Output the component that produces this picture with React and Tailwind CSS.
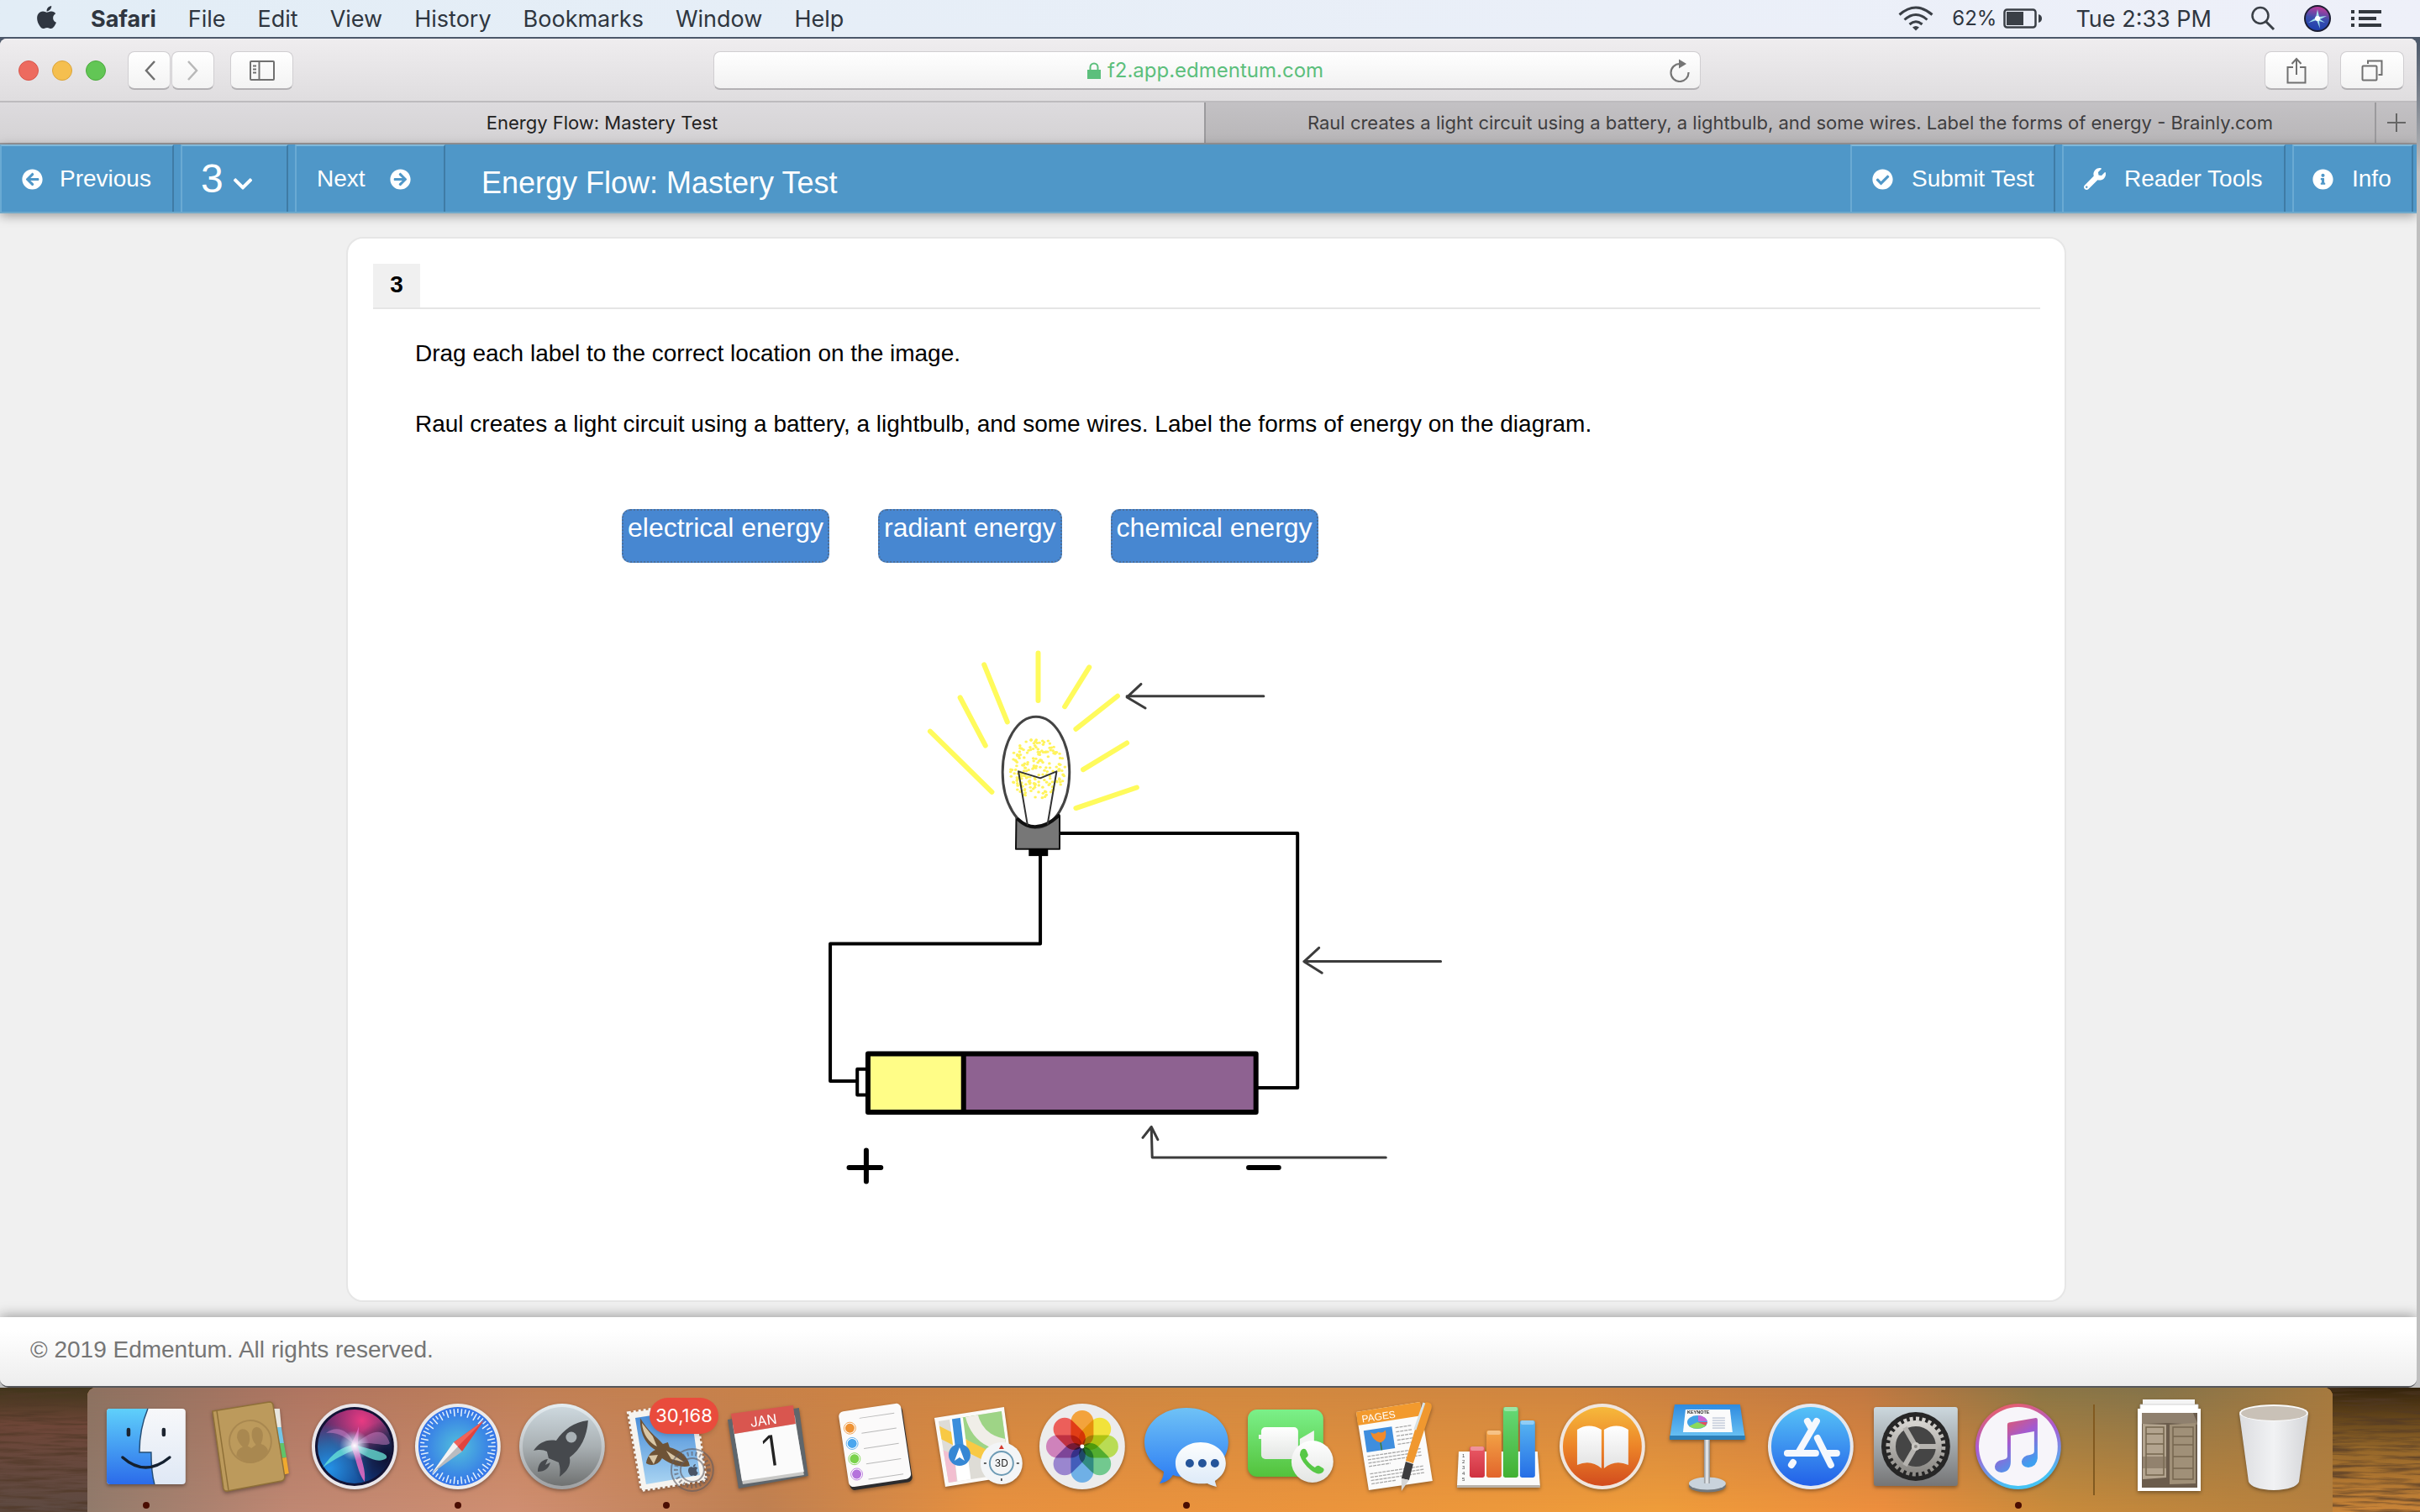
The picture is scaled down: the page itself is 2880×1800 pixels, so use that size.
import React from "react";
import {
  FaApple,
  FaArrowCircleLeft,
  FaArrowCircleRight,
  FaCheckCircle,
  FaChevronDown,
  FaInfoCircle,
  FaWrench,
} from "react-icons/fa";

const UI = "font-['Inter','Liberation_Sans',sans-serif]";
const PAGE = "font-['Liberation_Sans',Arial,sans-serif]";

/* ---------- menu bar ---------- */

function SiriGlyph() {
  return (
    <svg className="size-8" viewBox="0 0 32 32" aria-hidden="true">
      <defs>
        <linearGradient id="siriSmall" x1="0.6" y1="0" x2="0.4" y2="1">
          <stop offset="0" stopColor="#c23a9a" />
          <stop offset="0.5" stopColor="#3b4fae" />
          <stop offset="1" stopColor="#1d3fae" />
        </linearGradient>
      </defs>
      <circle cx="16" cy="16" r="16" fill="#1b1d33" />
      <circle cx="16" cy="16" r="14" fill="url(#siriSmall)" />
      <path d="M5 21L14 15L16 5L18 14L27 13L19 17L25 21L18 19L19 28L15 18Z" fill="#aef3f5" opacity="0.9" />
      <circle cx="16" cy="16" r="3" fill="#fff" />
    </svg>
  );
}

function MenuBar() {
  const items = ["File", "Edit", "View", "History", "Bookmarks", "Window", "Help"];
  return (
    <header className={`${UI} flex h-11 shrink-0 items-center bg-linear-to-r from-[#e2edf6] to-[#eef0f9] text-[27px] leading-none text-[#2f3640]`}>
      <button aria-label="Apple menu" className="ml-10 mr-[37px] -mt-1">
        <FaApple className="size-[31px]" />
      </button>
      <nav className="flex gap-[38px]">
        <button className="font-bold">Safari</button>
        {items.map((t) => (
          <button key={t}>{t}</button>
        ))}
      </nav>
      <div className="ml-auto flex items-center pr-[46px]">
        <svg className="h-[30px] w-[42px]" viewBox="0 0 42 30" fill="none" stroke="#3a3f46" strokeWidth="3" role="img" aria-label="Wi-Fi">
          <path d="M1.5 10.500Q21 -6.500 40.500 10.500" />
          <path d="M7.500 16.500Q21 4.500 34.500 16.500" />
          <path d="M13.500 22Q21 15.500 28.500 22" />
          <path d="M17 25.500Q21 22.500 25 25.500L21 29.500Z" fill="#3a3f46" stroke="none" />
        </svg>
        <span className="ml-[22px] text-[24px]">62%</span>
        <svg className="ml-2 h-6 w-[46px]" viewBox="0 0 46 24" role="img" aria-label="Battery">
          <rect x="1.500" y="1.500" width="37" height="21" rx="3" fill="none" stroke="#3a3f46" strokeWidth="2.500" />
          <rect x="4" y="4" width="20" height="16" fill="#3a3f46" />
          <path d="M42 7Q46 8 46 12T42 17Z" fill="#3a3f46" />
        </svg>
        <time className="ml-10">Tue 2:33 PM</time>
        <button aria-label="Spotlight" className="ml-[46px]">
          <svg className="size-[30px]" viewBox="0 0 30 30" fill="none" stroke="#3a3f46" strokeWidth="2.500">
            <circle cx="12" cy="11.500" r="9.500" />
            <path d="M18.500 18.500L28 28" strokeWidth="3" />
          </svg>
        </button>
        <button aria-label="Siri" className="ml-[34px]">
          <SiriGlyph />
        </button>
        <button aria-label="Notification Center" className="ml-6">
          <svg className="h-5 w-9" viewBox="0 0 36 20" fill="#33383f">
            <path d="M0 0h4v4H0zM9 0h27v4H9zM0 8h4v4H0zM9 8h21v4H9zM0 16h4v4H0zM9 16h27v4H9z" />
          </svg>
        </button>
      </div>
    </header>
  );
}

/* ---------- browser chrome ---------- */

function ToolButton({ label, className, children }) {
  return (
    <button
      aria-label={label}
      className={`flex h-[46px] items-center justify-center rounded-lg border border-b-2 border-[#d0ced1] border-b-[#b3b1b4] bg-linear-to-b from-white to-[#f3f3f3] text-[#6f6f6f] ${className}`}
    >
      {children}
    </button>
  );
}

function Toolbar() {
  return (
    <div className="flex h-[76px] items-center border-b-2 border-[#bdbbbe] bg-linear-to-b from-[#efedef] to-[#dfdddf] pl-[22px] pr-[15px] pt-[2px]">
      <div className="flex flex-1 items-center">
        <div className="flex gap-4">
          <button aria-label="Close" className="size-6 rounded-full border border-[#d8574c] bg-[#ed6b5f]" />
          <button aria-label="Minimize" className="size-6 rounded-full border border-[#dba43c] bg-[#f5bf4f]" />
          <button aria-label="Zoom" className="size-6 rounded-full border border-[#4caa3e] bg-[#62c655]" />
        </div>
        <ToolButton label="Back" className="ml-[26px] w-[51px]">
          <svg className="h-6 w-4" viewBox="0 0 16 24" fill="none" stroke="#707070" strokeWidth="2.500"><path d="M14 1L4 12L14 23" /></svg>
        </ToolButton>
        <ToolButton label="Forward" className="ml-px w-[51px]">
          <svg className="h-6 w-4" viewBox="0 0 16 24" fill="none" stroke="#b8b8b8" strokeWidth="2.500"><path d="M2 1L12 12L2 23" /></svg>
        </ToolButton>
        <ToolButton label="Show sidebar" className="ml-[19px] w-[75px]">
          <svg className="h-6 w-[30px]" viewBox="0 0 30 24" fill="none" stroke="#707070" strokeWidth="2">
            <rect x="1" y="1" width="28" height="22" rx="1" />
            <path d="M11.500 1V23M4 6.500H8M4 10.500H8M4 14.500H8" />
          </svg>
        </ToolButton>
      </div>
      <div className="mr-2.5 flex h-[46px] w-[41.4%] items-center rounded-lg border border-b-2 border-[#d0ced1] border-b-[#b3b1b4] bg-linear-to-b from-white to-[#f1f1f1] px-3">
        <div className="flex flex-1 items-center justify-center gap-2 pl-5">
          <svg className="h-5 w-4" viewBox="0 0 16 20" fill="#5cbf7c" aria-hidden="true">
            <path d="M0 9h16v11H0z" />
            <path d="M3.500 10V6a4.500 4.500 0 0 1 9 0v4" fill="none" stroke="#5cbf7c" strokeWidth="2" />
          </svg>
          <a href="#page" className={`${UI} text-[24px] leading-none text-[#5cbf7c]`}>f2.app.edmentum.com</a>
        </div>
        <button aria-label="Reload">
          <svg className="h-7 w-6" viewBox="0 0 24 28" fill="none" stroke="#757575" strokeWidth="2.200">
            <path d="M22.500 16A10.500 10.500 0 1 1 12 6" />
            <path d="M11 0.500L20 6L11 11.500Z" fill="#757575" stroke="none" />
          </svg>
        </button>
      </div>
      <div className="flex flex-1 justify-end gap-[14px]">
        <ToolButton label="Share" className="w-[76px]">
          <svg className="h-8 w-6" viewBox="0 0 24 32" fill="none" stroke="#707070" strokeWidth="2">
            <path d="M8 12H1.500V30.500H22.500V12H16M12 21V2M6.500 8L12 2L17.500 8" />
          </svg>
        </ToolButton>
        <ToolButton label="Show all tabs" className="w-[76px]">
          <svg className="size-[26px]" viewBox="0 0 26 26" fill="none" stroke="#707070" strokeWidth="2">
            <path d="M8 5V1.500H24.500V18H20.500" />
            <rect x="1.500" y="7.500" width="17" height="17" rx="1" />
          </svg>
        </ToolButton>
      </div>
    </div>
  );
}

function TabBar() {
  return (
    <div className={`${UI} flex h-[50px] border-b-2 border-[#9b9a9d] text-[22px] leading-none`}>
      <button className="flex-[1434_1_0%] truncate bg-linear-to-b from-[#dddbde] to-[#d4d2d4] text-[#222]">
        Energy Flow: Mastery Test
      </button>
      <button className="flex-[1392_1_0%] truncate border-l-2 border-[#9b9a9d] bg-linear-to-b from-[#c3c1c4] to-[#b8b6b8] text-[#3f3e40]">
        Raul creates a light circuit using a battery, a lightbulb, and some wires. Label the forms of energy - Brainly.com
      </button>
      <button aria-label="New tab" className="flex w-[50px] items-center justify-center border-l-2 border-[#9b9a9d] bg-linear-to-b from-[#c3c1c4] to-[#b8b6b8]">
        <svg className="size-[22px]" viewBox="0 0 22 22" stroke="#666" strokeWidth="2"><path d="M11 0V22M0 11H22" /></svg>
      </button>
    </div>
  );
}

/* ---------- test page ---------- */

function NavButton({ className = "", children }) {
  return (
    <button className={`flex h-full items-center border-l-2 border-r-2 border-t-2 border-l-[#6aaad3] border-r-[#3f7ba5] border-t-[#7fb8da] ${className}`}>
      {children}
    </button>
  );
}

function TestHeader() {
  return (
    <div className={`${PAGE} relative flex h-[82px] shrink-0 items-stretch border-b-2 border-[#6fa9cb] bg-[#4f97c8] text-[28px] leading-8 text-white shadow-[0_3px_12px_rgba(0,0,0,0.35)]`}>
      <NavButton className="w-[207px] gap-5 pl-6">
        <FaArrowCircleLeft className="size-[25px]" />
        Previous
      </NavButton>
      <NavButton className="ml-2 w-[128px] gap-2.5 pl-[22px]">
        <span className="text-[48px] leading-none">3</span>
        <FaChevronDown className="mt-3 size-[26px]" />
      </NavButton>
      <NavButton className="ml-2 w-[179px] gap-[29px] pl-6">
        Next
        <FaArrowCircleRight className="size-[25px]" />
      </NavButton>
      <h1 className="ml-[43px] self-center pt-3 text-[36px] leading-10">Energy Flow: Mastery Test</h1>
      <div className="ml-auto flex pr-1">
        <NavButton className="w-[244px] gap-[22px] pl-6">
          <FaCheckCircle className="size-[25px]" />
          Submit Test
        </NavButton>
        <NavButton className="ml-2 w-[266px] gap-[22px] pl-6">
          <FaWrench className="size-[26px]" />
          Reader Tools
        </NavButton>
        <NavButton className="ml-2 w-[144px] gap-[22px] pl-[22px]">
          <FaInfoCircle className="size-[25px]" />
          Info
        </NavButton>
      </div>
    </div>
  );
}

/* deterministic scatter of glowing specks inside the bulb */
const noise = (n) => {
  const v = Math.sin(n * 127.1) * 43758.5453;
  return v - Math.floor(v);
};
const sparks = Array.from({ length: 190 }, (_, i) => {
  const a = noise(i + 1) * Math.PI * 2;
  const r = Math.sqrt(noise(i + 301));
  return [538 + Math.cos(a) * r * 66, 392 + Math.sin(a) * r * 80];
});

function CircuitDiagram() {
  return (
    <svg
      className="h-[700px] w-[800px] [&_*]:[vector-effect:non-scaling-stroke]"
      viewBox="0 0 1568 1570"
      preserveAspectRatio="none"
      fill="none"
      strokeLinecap="round"
      strokeLinejoin="round"
      role="img"
      aria-label="Circuit with a battery, two wires and a glowing lightbulb; three arrows mark places for labels"
    >
      <g stroke="#fffb5c" strokeWidth="6">
        <path d="M288 293L432 455M358 203L417 331M414 115L468 268M540 84V211M659 122L602 227M725 199L628 287M747 324L645 395M770 443L628 498" />
      </g>
      <g stroke="#000" strokeWidth="4">
        <path d="M590 565H1145V1245H1053" />
        <path d="M545 620V860H55V1227H118" />
        <path d="M142 1195H118V1264H142" />
      </g>
      <path d="M489 520H590V607H488Z" fill="#777" stroke="#111" strokeWidth="2" />
      <ellipse cx="535" cy="402" rx="78" ry="148" fill="#fff" stroke="#444" strokeWidth="3" />
      <path d="M493 528Q535 572 588 518" stroke="#111" strokeWidth="4" />
      <g fill="#fff35c">
        {sparks.map(([x, y], i) => (
          <circle key={i} cx={x} cy={y} r="3.500" />
        ))}
      </g>
      <path d="M515 542L494 400L545 418L583 400L562 540" stroke="#333" strokeWidth="2" />
      <path d="M518 607H563V626H518Z" fill="#000" />
      <path d="M143 1154H366V1310H143Z" fill="#fffd87" />
      <path d="M366 1154H1048V1310H366Z" fill="#8e6291" />
      <path d="M143 1154H1048V1310H143ZM366 1154V1310" stroke="#000" strokeWidth="6" />
      <g stroke="#3c3c3c" strokeWidth="3">
        <path d="M1066 199H747M780 167L747 202L790 231" />
        <path d="M1479 907H1160M1195 871L1160 908L1202 938" />
        <path d="M1351 1431H806L804 1349M784 1378L804 1349L819 1383" />
      </g>
      <g stroke="#000" strokeWidth="6">
        <path d="M99 1458H173M139 1412V1495M1031 1458H1101" />
      </g>
    </svg>
  );
}

function Question() {
  return (
    <main id="page" className="flex flex-1 flex-col pb-[18px] pl-[412px] pr-[417px] pt-7">
      <section className={`${PAGE} flex flex-1 flex-col rounded-[20px] border-2 border-[#e6e6e6] bg-white px-[29px] pt-[30px] text-[28px] leading-[42px] text-black`}>
        <div className="ml-px flex border-b-2 border-[#e5e5e5]">
          <h2 className="w-14 bg-[#f0f0f0] pb-1.5 pt-1 text-center font-bold">3</h2>
        </div>
        <div className="pl-[51px] pt-8">
          <p>Drag each label to the correct location on the image.</p>
          <p className="mt-[42px]">Raul creates a light circuit using a battery, a lightbulb, and some wires. Label the forms of energy on the diagram.</p>
        </div>
        <div className="mt-[80px] flex gap-[58px] pl-[297px] text-[32px] leading-8 text-white">
          {["electrical energy", "radiant energy", "chemical energy"].map((t) => (
            <button key={t} className="h-16 rounded-[10px] border-2 border-dotted border-[#4d6f99] bg-[#4787d1] px-[5px] pb-[21px] text-center">
              {t}
            </button>
          ))}
        </div>
        <div className="mt-[70px] pl-[517px]">
          <CircuitDiagram />
        </div>
      </section>
    </main>
  );
}

/* ---------- dock icons, each drawn in a 124 x 148 slot ---------- */

const Grad = ({ id, from, mid, to, x2 = "0", y2 = "1" }) => (
  <linearGradient id={id} x1="0" y1="0" x2={x2} y2={y2}>
    <stop offset="0" stopColor={from} />
    {mid && <stop offset="0.5" stopColor={mid} />}
    <stop offset="1" stopColor={to} />
  </linearGradient>
);

const polar = (cx, cy, r, deg) => [cx + r * Math.cos((deg * Math.PI) / 180), cy + r * Math.sin((deg * Math.PI) / 180)];

const Finder = () => (
  <>
    <defs>
      <Grad id="fL" from="#5fd0fb" to="#2b6bea" />
      <Grad id="fR" from="#f7f8fa" to="#dfe8f5" />
    </defs>
    <rect x="15" y="25" width="94" height="90" rx="4" fill="url(#fR)" />
    <path d="M64 25C57 42 54 58 54 77H68C68 92 69 104 72 115H19Q15 115 15 111V29Q15 25 19 25Z" fill="url(#fL)" />
    <path d="M64 25C57 42 54 58 54 77H68C68 92 69 104 72 115" fill="none" stroke="#254f77" strokeWidth="1.500" />
    <path d="M41 50V56M83 50V56" stroke="#1c2430" strokeWidth="4.500" strokeLinecap="round" />
    <path d="M34 83Q61 107 90 83" fill="none" stroke="#14202f" strokeWidth="3.500" strokeLinecap="round" />
  </>
);

const Contacts = () => (
  <>
    <path d="M90 25L97 25L99 47L92 48Z" fill="#e8e6df" />
    <path d="M92 47L99 47L102 66L95 67Z" fill="#74c5e6" />
    <path d="M95 66L102 66L105 83L98 84Z" fill="#5fc46a" />
    <path d="M98 84L105 83L108 102L100 104Z" fill="#f0a92e" />
    <path d="M17 28L85 17Q88 17 89 20L103 106Q103 110 99 111L35 123Q31 124 30 120Z" fill="#bc9a5c" stroke="#8f7038" strokeWidth="1.500" />
    <path d="M22 27L36 122" stroke="#8f7038" strokeWidth="1.500" />
    <g transform="rotate(-9 62 64)">
      <circle cx="62" cy="64" r="25" fill="none" stroke="#a98850" strokeWidth="2" />
      <path d="M43 78Q44 71 52 69Q48 64 47 57Q48 48 55 48Q62 49 62 57T58 69L62 72L68 69Q64 63 65 56Q66 48 72 48Q79 50 78 59Q77 65 74 69Q81 72 81 79Q74 89 62 89T43 78Z" fill="#a98850" />
    </g>
  </>
);

const Siri = () => (
  <>
    <defs>
      <Grad id="sBg" from="#7b1f68" mid="#32406f" to="#12387f" x2="0.2" />
      <radialGradient id="sR" cx="0.6" cy="0.15" r="0.5">
        <stop offset="0" stopColor="#e93a82" />
        <stop offset="1" stopColor="#e93a82" stopOpacity="0" />
      </radialGradient>
      <radialGradient id="sB" cx="0.15" cy="0.8" r="0.6">
        <stop offset="0" stopColor="#2392e8" />
        <stop offset="1" stopColor="#2392e8" stopOpacity="0" />
      </radialGradient>
      <radialGradient id="sD" cx="0.95" cy="0.65" r="0.5">
        <stop offset="0" stopColor="#0d1030" />
        <stop offset="1" stopColor="#0d1030" stopOpacity="0" />
      </radialGradient>
      <radialGradient id="sG" cx="0.5" cy="0.5" r="0.5">
        <stop offset="0" stopColor="#fff" />
        <stop offset="1" stopColor="#bfe6ff" stopOpacity="0" />
      </radialGradient>
    </defs>
    <circle cx="62" cy="70" r="51" fill="#e9e6ea" />
    <circle cx="62" cy="70" r="47" fill="#121335" />
    <circle cx="62" cy="70" r="44" fill="url(#sBg)" />
    <circle cx="62" cy="70" r="44" fill="url(#sR)" />
    <circle cx="62" cy="70" r="44" fill="url(#sB)" />
    <circle cx="62" cy="70" r="44" fill="url(#sD)" />
    <path d="M62 68C56 50 40 44 28 54C40 52 52 58 62 68C80 62 100 72 104 66C98 46 82 50 62 68Z" fill="#d98ad0" opacity="0.45" />
    <path d="M62 68C46 70 36 78 24 95C40 84 50 79 62 74C74 80 88 92 100 84C104 78 84 74 62 68Z" fill="#6be8d8" opacity="0.75" />
    <path d="M67 46C64 58 58 64 58 70C64 84 66 102 74 112C76 100 70 84 66 70C66 62 67 56 67 46Z" fill="#ea6cc4" opacity="0.85" />
    <circle cx="62" cy="69" r="18" fill="url(#sG)" />
  </>
);

const Safari = () => (
  <>
    <defs>
      <radialGradient id="saB">
        <stop offset="0" stopColor="#52c0dc" />
        <stop offset="1" stopColor="#3373e8" />
      </radialGradient>
    </defs>
    <circle cx="62" cy="70" r="51" fill="#eceaea" />
    <circle cx="62" cy="70" r="47" fill="url(#saB)" />
    {Array.from({ length: 60 }, (_, i) => {
      const [x1, y1] = polar(62, 70, 45, i * 6);
      const [x2, y2] = polar(62, 70, i % 2 ? 40 : 36, i * 6);
      return <path key={i} d={`M${x1} ${y1}L${x2} ${y2}`} stroke="#e4f1fb" strokeWidth="1.500" />;
    })}
    <path d="M93 39L67 76L57 65Z" fill="#e0433e" />
    <path d="M57 65L62 70L93 39Z" fill="#f0645a" />
    <path d="M31 102L57 65L67 76Z" fill="#b9bcc0" />
    <path d="M31 102L57 65L62 70Z" fill="#f4f4f4" />
  </>
);

const Launchpad = () => (
  <>
    <defs>
      <Grad id="lB" from="#cdd8de" mid="#a9b0b3" to="#6f7171" />
      <Grad id="lR" from="#e5edf1" to="#9fa0a2" />
    </defs>
    <circle cx="62" cy="70" r="51" fill="url(#lR)" />
    <circle cx="62" cy="70" r="47" fill="url(#lB)" />
    <path d="M93 39C76 41 64 50 55 63C43 61 34 66 28 75C35 73 40 74 44 76L46 84L58 89C60 95 60 101 59 106C68 100 73 92 71 83C84 74 92 58 93 39Z" fill="#46494d" />
    <circle cx="73" cy="59" r="6.500" fill="#a9b1b5" />
    <path d="M45 85C37 86 33 92 33 100C42 100 46 96 48 89L42 92Z" fill="#46494d" />
  </>
);

const Mail = () => (
  <>
    <defs><Grad id="mB" from="#3f86d6" to="#a9d4f2" /></defs>
    <path d="M17 30L96 18L109 110L33 122Z" fill="#f6f4f0" stroke="#f6f4f0" strokeWidth="4" strokeDasharray="3 3" />
    <path d="M25 36L91 26L102 104L38 115Z" fill="url(#mB)" />
    <path d="M31 36C30 54 38 68 49 74C44 76 39 82 38 90C44 94 53 92 57 84C68 92 82 96 90 93C88 81 77 74 66 71L64 65L58 67C50 58 40 52 31 36Z" fill="#6e5336" />
    <path d="M33 42C34 56 42 66 51 70L46 58ZM41 81L52 80L47 91ZM62 75L84 89L68 85Z" fill="#d9c7a6" />
    <g fill="none" stroke="#5f5a60" opacity="0.6">
      <circle cx="93" cy="98" r="25" strokeWidth="2" />
      <circle cx="93" cy="98" r="14" strokeWidth="2" />
      <circle cx="93" cy="98" r="19.500" strokeWidth="5" strokeDasharray="2 3" />
    </g>
    <FaApple x="86" y="90" width="14" height="16" color="#4a5566" />
  </>
);

const Calendar = () => (
  <>
    <path d="M11 38L96 24L107 105L24 120Z" fill="#5f666c" />
    <path d="M17 44L91 33L102 104L29 115Z" fill="#c9c9c7" />
    <path d="M19 55L92 43L102 100L28 111Z" fill="#fbfbfb" />
    <path d="M15 31L89 21L92 43L19 55Z" fill="#d9564f" />
    <g transform="rotate(-8 62 70)" fontFamily="Inter, sans-serif" textAnchor="middle">
      <text x="58" y="44" fontSize="16" fill="#fff">JAN</text>
      <text x="61" y="93" fontSize="50" fontWeight="300" fill="#222">1</text>
    </g>
  </>
);

const Reminders = () => (
  <g transform="rotate(-8.500 62 70)">
    <rect x="26" y="26" width="75" height="92" rx="6" fill="#2c2c2e" />
    <rect x="25" y="23" width="75" height="91" rx="6" fill="#fbfafa" />
    {["#ee9235", "#4aa6ee", "#7bd24c", "#b573dc"].map((c, i) => (
      <g key={c}>
        <circle cx="36" cy={44 + i * 18.5} r="7" fill="#fff" stroke={c} strokeWidth="0.800" />
        <circle cx="36" cy={44 + i * 18.5} r="5.500" fill={c} />
        <path d={`M49 ${52 + i * 18.5}H91`} stroke="#b9b9b9" />
      </g>
    ))}
    <path d="M49 34H91" stroke="#b9b9b9" />
  </g>
);

const Maps = () => (
  <>
    <clipPath id="mapClip"><path d="M15 40L90 28L100 102L27 113Z" /></clipPath>
    <path d="M10 36L93 23L104 105L23 118Z" fill="#fbfaf8" />
    <g clipPath="url(#mapClip)">
      <path d="M0 0H124V148H0Z" fill="#dedcd6" />
      <path d="M42 20H124V90L70 80L44 58Z" fill="#9ed486" />
      <path d="M52 20C56 60 80 72 124 70" fill="none" stroke="#f0eee8" strokeWidth="15" />
      <path d="M10 70L34 80L38 130H20Z" fill="#f2bfd0" />
      <path d="M10 50L110 100" stroke="#f8c944" strokeWidth="13" />
      <path d="M34 20L48 130" stroke="#fff" strokeWidth="16" />
      <path d="M34 20L41 80" stroke="#3b8fdc" strokeWidth="10" />
    </g>
    <circle cx="40" cy="80" r="13" fill="#3687d4" />
    <path d="M40 71L46 87L40 83L34 87Z" fill="#fff" />
    <circle cx="90" cy="90" r="25" fill="#f3f5f7" />
    <circle cx="90" cy="90" r="14" fill="none" stroke="#6d9bb5" strokeWidth="2" />
    <path d="M90 68L93 73H87Z" fill="#d43a30" />
    <path d="M69 90H72M108 90H111M90 108V111" stroke="#333" strokeWidth="1.500" />
    <text x="90" y="94.500" fontSize="12" textAnchor="middle" fill="#222" fontFamily="Inter, sans-serif">3D</text>
  </>
);

const Photos = () => (
  <>
    <circle cx="62" cy="70" r="51" fill="#ececec" />
    <g className="isolate">
      {["#f3a33c", "#f2e23b", "#b9dc54", "#72c98f", "#6fb0e6", "#9a86cf", "#cf82bb", "#ec5f5a"].map((c, i) => (
        <rect key={c} x="48.500" y="27" width="27" height="43" rx="13.500" fill={c} className="mix-blend-multiply" transform={`rotate(${i * 45} 62 70)`} />
      ))}
    </g>
    <circle cx="62" cy="70" r="2.500" fill="#fff" />
  </>
);

const Messages = () => (
  <>
    <defs>
      <Grad id="meB" from="#6fc2f6" to="#2b7bf3" />
      <Grad id="meS" from="#fdfefe" to="#dbe9f8" />
    </defs>
    <path d="M62 24C90 24 112 42 112 65S90 106 62 106C56 106 51 106 46 104C42 110 37 113 30 114C33 110 35 105 35 100C21 92 12 80 12 65C12 42 34 24 62 24Z" fill="url(#meB)" />
    <path d="M79 65C96 65 109 76 109 90C109 99 104 106 96 111L98 118C93 117 89 115 87 114C62 117 49 104 49 90C49 76 62 65 79 65Z" fill="url(#meS)" />
    <g fill="#24549a"><circle cx="66" cy="90" r="5" /><circle cx="81" cy="90" r="5" /><circle cx="96" cy="90" r="5" /></g>
  </>
);

const FaceTime = () => (
  <>
    <defs>
      <Grad id="ftG" from="#7bf089" to="#53c23c" />
      <Grad id="ftW" from="#fff" to="#e3e6e3" />
    </defs>
    <rect x="11" y="26" width="90" height="80" rx="11" fill="url(#ftG)" />
    <rect x="27" y="47" width="44" height="38" rx="5" fill="url(#ftW)" />
    <path d="M73 61L90 51V72H73ZM24 56H27V61H24Z" fill="#f2f4f2" />
    <circle cx="88" cy="88" r="25" fill="url(#ftW)" />
    <path d="M75 74Q79 71 81 75L83 80Q83 82 80 84Q84 91 91 95Q94 92 96 93L101 96Q103 98 100 101Q95 105 86 98Q76 90 73 80Q73 76 75 74Z" fill="#57c846" />
  </>
);

const Pages = () => (
  <>
    <path d="M16 29L92 17L107 111L31 122Z" fill="#fbfbfb" />
    <path d="M16 29L92 17L95 33L18 45Z" fill="#f29a2e" />
    <g transform="rotate(-8.500 62 70)">
      <text x="28" y="36" fontSize="12" fill="#fff" fontFamily="Liberation Sans, sans-serif">PAGES</text>
      <rect x="28" y="46" width="34" height="26" fill="#3f8ede" />
      <path d="M36 49Q40 53 45 50Q50 53 54 49Q55 60 46 63Q37 60 36 49Z" fill="#f08a2c" />
      <path d="M46 63V72" stroke="#3b7a3a" strokeWidth="1.500" />
      <path d="M66 48H86M66 53H86M66 58H86M66 63H86M66 68H86M28 77H92M28 81H92M28 85H92M28 89H54M28 98H92M28 102H92M28 106H92M28 110H58" stroke="#a8a8a8" strokeWidth="1.300" strokeDasharray="4 1" />
    </g>
    <path d="M95 20Q99 15 105 19Q107 22 105 27L84 90L75 87Z" fill="#f0982f" />
    <path d="M97 18L86 50" stroke="#d7e2e6" strokeWidth="3" />
    <path d="M75 88L84 91L79 110L70 108Z" fill="#3c3c3e" />
    <path d="M70 108L79 110L70 123Z" fill="#d5d5d5" />
  </>
);

const Numbers = () => (
  <>
    <defs>
      <Grad id="n0" from="#ea5a66" to="#cf3140" />
      <Grad id="n1" from="#f3a546" to="#e2652c" />
      <Grad id="n2" from="#66d977" to="#42b032" />
      <Grad id="n3" from="#57b5f1" to="#256ee6" />
    </defs>
    <path d="M15 76H109L112 117H13Z" fill="#fafafa" />
    <path d="M13 116H112V119H13Z" fill="#b9b2aa" />
    {[1, 2, 3, 4, 5].map((n) => (
      <text key={n} x="19" y={76 + n * 7} fontSize="6" fill="#444" fontFamily="Liberation Sans, sans-serif">{n}</text>
    ))}
    {[[28, 70], [48, 51], [68, 23], [88, 39]].map(([x, y], i) => (
      <g key={x}>
        <rect x={x} y={y} width="18" height={107 - y} rx="2.500" fill={["url(#n0)", "url(#n1)", "url(#n2)", "url(#n3)"][i]} />
        <rect x={x + 1} y={y} width="16" height="5" rx="2" fill="#fff" opacity="0.350" />
      </g>
    ))}
  </>
);

const Books = () => (
  <>
    <defs>
      <Grad id="bo" from="#f6b93c" mid="#ec8428" to="#d24c1e" />
      <Grad id="bw" from="#fff" to="#e2e2e2" />
    </defs>
    <circle cx="62" cy="70" r="51" fill="#f0e6de" />
    <circle cx="62" cy="70" r="47" fill="url(#bo)" />
    <path d="M32 50Q46 41 61 50V96Q48 85 32 92ZM64 50Q79 41 93 50V92Q77 85 64 96Z" fill="url(#bw)" />
  </>
);

const Keynote = () => (
  <>
    <defs>
      <Grad id="kB" from="#2f8be0" to="#6cc4f4" />
      <Grad id="kP" from="#8e9398" mid="#eef1f4" to="#8e9398" x2="1" y2="0" />
    </defs>
    <ellipse cx="63" cy="117" rx="22" ry="7.500" fill="#70777d" />
    <ellipse cx="63" cy="114" rx="22" ry="7.500" fill="#c9d3dc" />
    <rect x="59" y="60" width="7" height="54" fill="url(#kP)" />
    <path d="M24 20H102L108 61H18Z" fill="url(#kB)" />
    <path d="M18 57H108V62H18Z" fill="#2c7fb8" />
    <path d="M37 26H90L93 53H34Z" fill="#fbfbfb" />
    <text x="39" y="31" fontSize="5.500" fontWeight="700" fill="#222" fontFamily="Liberation Sans, sans-serif">KEYNOTE</text>
    <ellipse cx="51" cy="41" rx="12" ry="8" fill="#43a2e6" />
    <path d="M51 41L41 46Q51 52 62 45Z" fill="#8bd95c" />
    <path d="M52 40V33Q61 34 63 40Z" fill="#c567d8" />
    <path d="M52 41H63L61 45Z" fill="#e6505e" />
    <path d="M69 36H84M69 39H84M69 42H84M69 45H84M69 48H84" stroke="#a9b4c9" strokeWidth="1" />
  </>
);

const AppStore = () => (
  <>
    <defs><Grad id="as" from="#56c2f7" to="#2260e8" /></defs>
    <circle cx="62" cy="70" r="51" fill="#e6e8ee" />
    <circle cx="62" cy="70" r="47" fill="url(#as)" />
    <g stroke="#f5f8fd" strokeWidth="8" strokeLinecap="round">
      <path d="M69 40L48 76M41 89L39 92M58 40L62 47M70 60L86 92M34 78H68M82 78H93" />
    </g>
  </>
);

const Preferences = () => (
  <>
    <defs>
      <Grad id="pB" from="#ccd8de" to="#757576" />
      <Grad id="pG" from="#d5d3cf" to="#8d8b87" />
    </defs>
    <rect x="13" y="23" width="100" height="94" rx="3" fill="url(#pB)" />
    <circle cx="63" cy="70" r="41" fill="#262626" />
    <circle cx="63" cy="70" r="33" fill="none" stroke="url(#pG)" strokeWidth="5" strokeDasharray="4 3.400" />
    <circle cx="63" cy="70" r="27.500" fill="#454545" stroke="url(#pG)" strokeWidth="7" />
    {[0, 120, 240].map((d) => {
      const [x, y] = polar(63, 70, 26, d);
      return <path key={d} d={`M63 70L${x} ${y}`} stroke="#b5b3af" strokeWidth="6" />;
    })}
    <circle cx="63" cy="70" r="5" fill="#c9c7c3" />
    <circle cx="63" cy="70" r="2" fill="#8b8985" />
  </>
);

const ITunes = () => (
  <>
    <defs>
      <Grad id="iR" from="#f7604f" mid="#a85bd6" to="#45c3f4" x2="0.300" />
      <Grad id="iN" from="#f2574f" mid="#a35ad0" to="#3f9ff0" x2="0.500" />
    </defs>
    <circle cx="62" cy="70" r="51" fill="url(#iR)" />
    <circle cx="62" cy="70" r="47" fill="#f7f5fa" />
    <path d="M49 44Q49 42 51 41.500L83 36Q85 36 85 38V84Q84 94 74 95Q66 94 66 88Q67 81 76 80Q81 79 81 76V52L53 57V88Q53 100 42 101Q34 100 34 94Q35 87 43 86Q49 85 49 82Z" fill="url(#iN)" />
  </>
);

const Stack = () => (
  <>
    <path d="M30 14H92V28H30Z" fill="#f4f4f4" />
    <path d="M27 20H96V30H27Z" fill="#fff" stroke="#c9c9c9" strokeWidth="0.800" />
    <path d="M24 25H99V123H24Z" fill="#fff" />
    <path d="M29 30H95V119H29Z" fill="#6b5c4c" />
    <path d="M29 30H90L95 42V44L60 42L29 43Z" fill="#8f806e" />
    <path d="M30 43L58 44V107L30 109Z" fill="#b3a48f" />
    <path d="M62 44L93 42V114L62 115Z" fill="#a09078" />
    <path d="M34 47H55V104H34ZM66 47H90V109H66ZM34 55H55M34 67H55M34 79H55M66 58H90M66 68H90M66 82H90M66 96H90" fill="none" stroke="#75664f" strokeWidth="1.500" />
    <path d="M30 82H58V96H30Z" fill="#7b6c59" opacity="0.600" />
  </>
);

const Trash = () => (
  <>
    <defs><Grad id="tr" from="#dcdde0" mid="#f1f2f4" to="#d5d6d9" x2="1" y2="0" /></defs>
    <path d="M21 31L32 112Q36 121 62 122Q88 121 92 112L103 31Z" fill="url(#tr)" />
    <ellipse cx="62" cy="30" rx="41" ry="10" fill="#fafafa" />
    <ellipse cx="62" cy="30.500" rx="39" ry="8.500" fill="#c9c1b7" />
  </>
);

const apps = [
  ["Finder", Finder, true],
  ["Contacts", Contacts],
  ["Siri", Siri],
  ["Safari", Safari, true],
  ["Launchpad", Launchpad],
  ["Mail", Mail, true, "30,168"],
  ["Calendar", Calendar],
  ["Reminders", Reminders],
  ["Maps", Maps],
  ["Photos", Photos],
  ["Messages", Messages, true],
  ["FaceTime", FaceTime],
  ["Pages", Pages],
  ["Numbers", Numbers],
  ["Books", Books],
  ["Keynote", Keynote],
  ["App Store", AppStore],
  ["System Preferences", Preferences],
  ["iTunes", ITunes, true],
];

function DockItem({ label, Icon, running, badge, className = "" }) {
  return (
    <button aria-label={label} className={`relative h-[148px] ${className}`}>
      <svg className="h-full w-full drop-shadow-[0_2px_2px_rgba(0,0,0,0.35)]" viewBox="0 0 124 148" aria-hidden="true">
        <Icon />
      </svg>
      {badge && (
        <span className={`${UI} absolute right-0 top-3 rounded-full bg-[#e94b3c] px-[7px] text-[22px] leading-[43px] text-white shadow-md`}>
          {badge}
        </span>
      )}
      {running && <span className="absolute bottom-1 left-1/2 size-2 -translate-x-1/2 rounded-full bg-[#4a0d02]" />}
    </button>
  );
}

function Dock() {
  return (
    <div className="relative h-[148px] shrink-0 overflow-hidden">
      <svg className="absolute inset-0 h-full w-full" aria-hidden="true">
        <defs>
          <filter id="grain" x="0" y="0" width="100%" height="100%">
            <feTurbulence type="fractalNoise" baseFrequency="0.015 0.22" numOctaves="4" seed="7" />
            <feColorMatrix values="0 0 0 0 0.08  0 0 0 0 0.04  0 0 0 0 0.02  3 0 0 0 -1.250" />
          </filter>
          <linearGradient id="wood" x1="0" y1="0" x2="0" y2="1">
            <stop offset="0" stopColor="#40351a" />
            <stop offset="0.300" stopColor="#6e4638" />
            <stop offset="1" stopColor="#5d4a42" />
          </linearGradient>
          <linearGradient id="woodRight" x1="0" y1="0" x2="0" y2="1">
            <stop offset="0" stopColor="#33230c" />
            <stop offset="0.500" stopColor="#96682a" />
            <stop offset="1" stopColor="#c98438" />
          </linearGradient>
        </defs>
        <rect width="50%" height="100%" fill="url(#wood)" />
        <rect x="50%" width="50%" height="100%" fill="url(#woodRight)" />
        <rect width="100%" height="100%" filter="url(#grain)" opacity="0.700" />
      </svg>
      <div className="relative mx-[104px] flex h-full overflow-hidden rounded-t-[10px] bg-[#ec953c] px-2">
        <div className="absolute inset-0 bg-[linear-gradient(to_right,#927b6c_0%,#c08873_9%,#d08f72_19%,#bf8052_30%,#e8913f_40%,#ec953c_55%,#f09d3a_70%,#ee8f3d_80%,#c98b3b_88%,#b5803f_100%)]" />
        <div className="absolute inset-0 bg-[linear-gradient(to_right,#8c7160_0%,#b07560_10%,#c07f55_20%,#cb8244_34%,#d08840_50%,#cf8540_66%,#c07842_79%,#8a7545_87%,#84734a_92%,#a5793f_100%)] [mask-image:linear-gradient(to_bottom,black,transparent)]" />
        <div className="relative flex flex-1">
          {apps.map(([label, Icon, running, badge]) => (
            <DockItem key={label} label={label} Icon={Icon} running={running} badge={badge} className="min-w-0 flex-1" />
          ))}
        </div>
        <div className="relative mx-[27px] my-5 w-[2px] bg-[#825a20]" />
        <DockItem label="Downloads" Icon={Stack} className="w-[124px]" />
        <DockItem label="Trash" Icon={Trash} className="w-[124px]" />
      </div>
    </div>
  );
}

export default function App() {
  return (
    <div className="flex min-h-screen flex-col bg-[#3c2b1c]">
      <MenuBar />
      <div className="flex flex-1 flex-col bg-linear-to-b from-[#4b5769] to-[#bfbfbf] to-10% pr-1 pt-[2px]">
        <div className="flex flex-1 flex-col overflow-hidden rounded-t-lg rounded-b-[10px] border-b-2 border-[#55565a] bg-[#f0f0f0]">
          <Toolbar />
          <TabBar />
          <TestHeader />
          <Question />
          <footer className={`${PAGE} relative bg-linear-to-b from-white from-20% to-[#ededed] pb-6 pl-9 pt-5 text-[28px] leading-[38px] text-[#757575] shadow-[0_-2px_14px_rgba(0,0,0,0.35)]`}>
            © 2019 Edmentum. All rights reserved.
          </footer>
        </div>
      </div>
      <Dock />
    </div>
  );
}
